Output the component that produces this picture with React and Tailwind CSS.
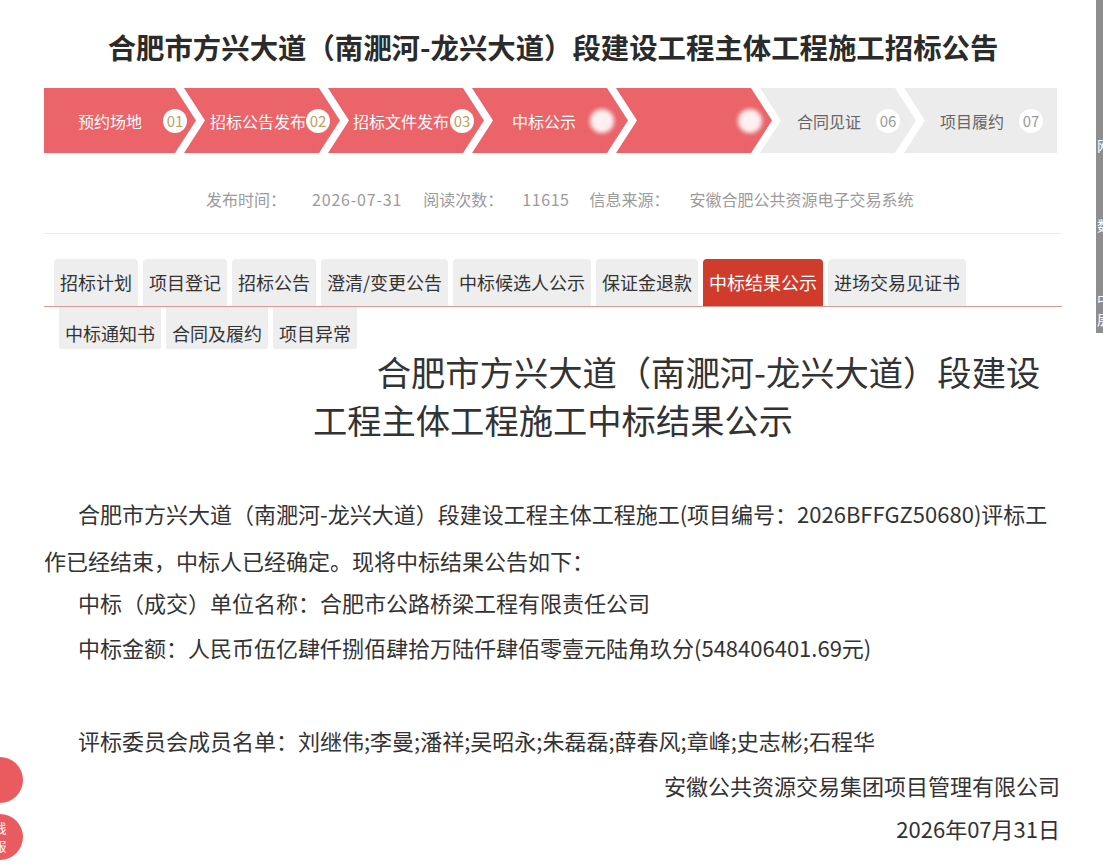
import React from "react";

const steps = [
  { label: "预约场地", num: "01", active: true, w: "w-[152px]", clip: "[clip-path:polygon(0_0,131px_0,152px_50%,131px_100%,0_100%)]", pl: "pl-[34px]", gap: "ml-[21px]", first: true },
  { label: "招标公告发布", num: "02", active: true, w: "w-[156px]", clip: "[clip-path:polygon(0_0,135px_0,156px_50%,135px_100%,0_100%,21px_50%)]", pl: "pl-[26px]", gap: "ml-0" },
  { label: "招标文件发布", num: "03", active: true, w: "w-[156px]", clip: "[clip-path:polygon(0_0,135px_0,156px_50%,135px_100%,0_100%,21px_50%)]", pl: "pl-[25px]", gap: "ml-[1px]" },
  { label: "中标公示", num: "04", active: true, w: "w-[156px]", clip: "[clip-path:polygon(0_0,135px_0,156px_50%,135px_100%,0_100%,21px_50%)]", pl: "pl-[40px]", gap: "ml-[14px]", blur: true },
  { label: "", num: "05", active: true, w: "w-[156px]", clip: "[clip-path:polygon(0_0,135px_0,156px_50%,135px_100%,0_100%,21px_50%)]", pl: "pl-[122px]", gap: "ml-0", blur: true },
  { label: "合同见证", num: "06", active: false, w: "w-[156px]", clip: "[clip-path:polygon(0_0,135px_0,156px_50%,135px_100%,0_100%,21px_50%)]", pl: "pl-[37px]", gap: "ml-[15px]" },
  { label: "项目履约", num: "07", active: false, w: "w-[153px]", clip: "[clip-path:polygon(0_0,100%_0,100%_100%,0_100%,21px_50%)]", pl: "pl-[36px]", gap: "ml-[15px]" },
];

const tabs1 = ["招标计划", "项目登记", "招标公告", "澄清/变更公告", "中标候选人公示", "保证金退款", "中标结果公示", "进场交易见证书"];
const tabs2 = ["中标通知书", "合同及履约", "项目异常"];

function StepBar() {
  return (
    <div className="flex h-[65px] mt-[22px]">
      {steps.map((s, i) => (
        <div
          key={s.num}
          className={`${s.w} ${s.clip} ${i === 0 ? "" : "-ml-[12px]"} ${s.active ? "bg-[#ea6469]" : "bg-[#ececec]"} ${s.pl} h-full shrink-0 flex items-center`}
        >
          {s.label && (
            <span className={`text-[16px] leading-none whitespace-nowrap ${s.active ? "text-white" : "text-[#666]"}`}>{s.label}</span>
          )}
          <span
            className={`${s.gap} ${s.blur ? "blur-[2px] opacity-90" : ""} w-[24px] h-[24px] rounded-full bg-white flex items-center justify-center text-[15px] leading-none shrink-0 ${s.active ? "text-[#bba262]" : "text-[#9a9a9a]"}`}
          >
            {s.blur ? "" : s.num}
          </span>
        </div>
      ))}
    </div>
  );
}

export default function App() {
  return (
    <div className="relative w-full min-h-[866px] bg-white overflow-hidden font-['Noto_Sans_CJK_SC','Noto_Sans',sans-serif]">
      <div className="ml-[44px] w-[1018px]">
        <div className="pt-[28px] leading-[38px] text-center text-[28.4px] font-bold text-[#2b2b2b] whitespace-nowrap">
          合肥市方兴大道（南淝河-龙兴大道）段建设工程主体工程施工招标公告
        </div>

        <StepBar />

        <div className="mt-[34px] flex pl-[162px] leading-[24px] text-[16px] text-[#9b9b9b] whitespace-nowrap">
          <span>发布时间：</span>
          <span className="ml-[26px] tracking-[0.8px]">2026-07-31</span>
          <span className="ml-[21px]">阅读次数：</span>
          <span className="ml-[19px] tracking-[0.6px]">11615</span>
          <span className="ml-[20px]">信息来源：</span>
          <span className="ml-[20px]">安徽合肥公共资源电子交易系统</span>
        </div>

        <div className="mt-[22px] h-px bg-[#ececec]" />

        <div className="mt-[25px] flex items-end gap-[5px] pl-[10px] border-b border-[#dc9a94]">
          {tabs1.map((t) => (
            <div
              key={t}
              className={`h-[47px] px-[6px] rounded-t-[4px] flex items-center text-[18px] whitespace-nowrap ${t === "中标结果公示" ? "bg-[#d13b2c] text-white" : "bg-[#eeeeee] text-[#333]"}`}
            >
              {t}
            </div>
          ))}
        </div>
        <div className="flex gap-[5px] pl-[15px]">
          {tabs2.map((t) => (
            <div key={t} className="h-[42px] px-[6px] pt-[14px] leading-[24px] bg-[#eeeeee] text-[#333] text-[18px] whitespace-nowrap rounded-b-[2px]">
              {t}
            </div>
          ))}
        </div>

        <div className="-mt-[2px] text-[34.3px] leading-[48px] text-[#333] whitespace-nowrap">
          <div className="pl-[311px] text-center">合肥市方兴大道（南淝河-龙兴大道）段建设</div>
          <div className="text-center">工程主体工程施工中标结果公示</div>
        </div>

        <div className="mt-[47px] text-[22px] text-[#333]">
          <div className="leading-[47px] pl-[34px] whitespace-nowrap">
            合肥市方兴大道（南淝河-龙兴大道）段建设工程主体工程施工(项目编号：2026BFFGZ50680)评标工
          </div>
          <div className="leading-[47px]">作已经结束，中标人已经确定。现将中标结果公告如下：</div>
          <div className="leading-[37px] pl-[34px]">中标（成交）单位名称：合肥市公路桥梁工程有限责任公司</div>
          <div className="leading-[53px] pl-[34px]">中标金额：人民币伍亿肆仟捌佰肆拾万陆仟肆佰零壹元陆角玖分(548406401.69元)</div>
          <div className="mt-[44px] leading-[45px] pl-[34px]">评标委员会成员名单：刘继伟;李曼;潘祥;吴昭永;朱磊磊;薛春风;章峰;史志彬;石程华</div>
          <div className="leading-[45px] text-right pr-[2px]">安徽公共资源交易集团项目管理有限公司</div>
          <div className="leading-[41px] text-right pr-[2px]">2026年07月31日</div>
        </div>
      </div>

      <div className="absolute right-0 top-0 w-[7px] h-[333px] bg-[#8e8e8e] overflow-hidden text-white text-[14px] leading-none">
        <span className="absolute left-[1px] top-[138px]">网</span>
        <span className="absolute left-[1px] top-[218px]">数</span>
        <span className="absolute left-[1px] top-[292px]">中</span>
        <span className="absolute left-[1px] top-[312px]">层</span>
      </div>

      <div className="absolute left-[-23px] top-[757px] w-[46px] h-[46px] rounded-full bg-[#ea5b60]" />
      <div className="absolute left-[-23px] top-[814px] w-[46px] h-[46px] rounded-full bg-[#ea5b60] flex flex-col items-center justify-center gap-[2px] text-white text-[13px] leading-[16px]">
        <span>线</span>
        <span>服</span>
      </div>
    </div>
  );
}
